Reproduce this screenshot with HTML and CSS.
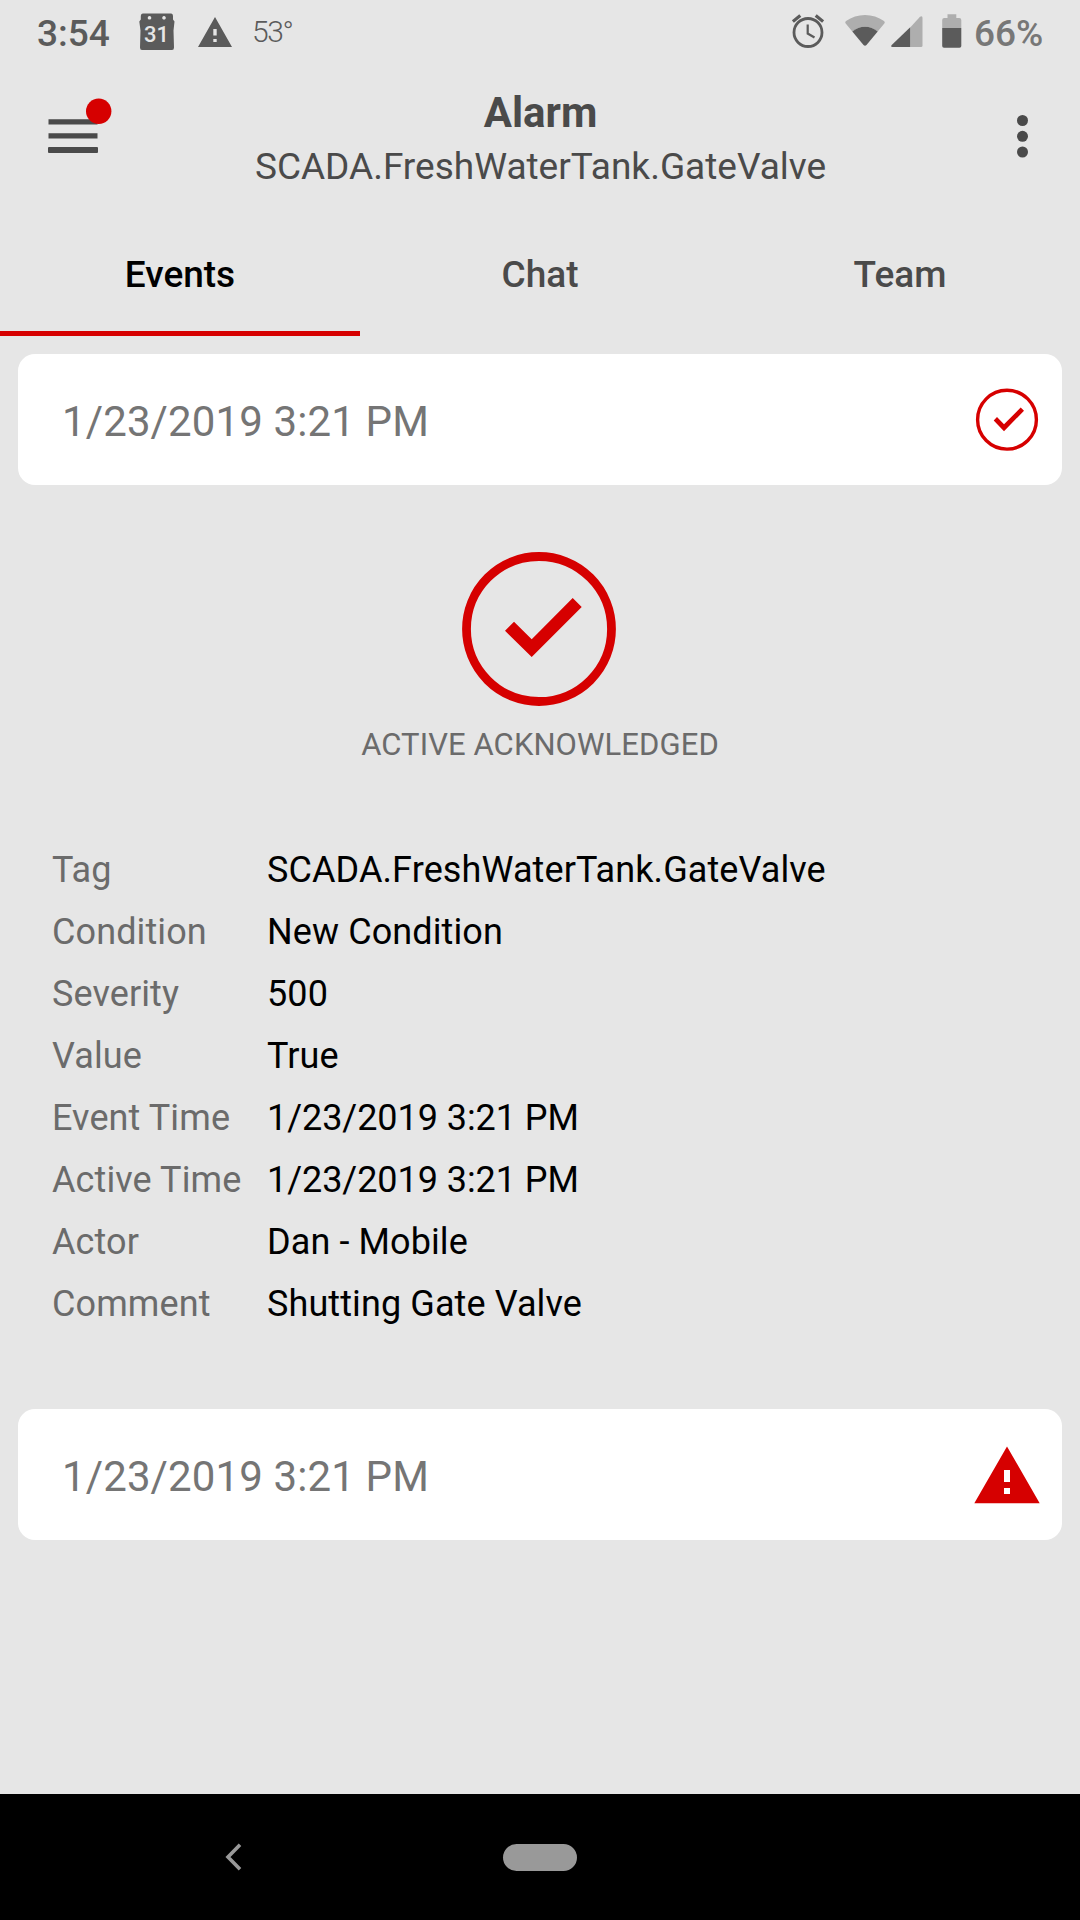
FILE: index.html
```
<!DOCTYPE html>
<html lang="en">
<head>
<meta charset="utf-8">
<title>Alarm</title>
<link rel="stylesheet" href="styles.css">
</head>
<body>
<div class="screen">
  <div class="status-bar">
    <span class="clock">3:54</span>
    <svg class="icon-calendar" width="36" height="38" viewBox="0 0 36 38">
      <path fill="#5b5b5b" fill-rule="evenodd" d="M4 .5h28q2 0 2 3v3l1.500 2-1 9 .5 17q0 2.500-2 2.500H3q-2 0-2-2.500L1.500 17.500.3 8.500 1.800 6.500v-3q0-3 2.200-3zM10.500 3a1.800 1.800 0 1 0 .01 0zM25 3a1.800 1.800 0 1 0 .01 0z"/>
      <text x="17.500" y="29" text-anchor="middle" class="calendar-day">31</text>
    </svg>
    <svg class="icon-warning" width="34" height="30" viewBox="0 0 34 30">
      <path fill="#5b5b5b" fill-rule="evenodd" d="M17 0 34 30H0zM15.300 12v6.500h3.400V12zM15.300 22v3h3.400v-3z"/>
    </svg>
    <span class="temperature">53°</span>
    <span class="spacer"></span>
    <svg class="icon-alarm" width="32" height="34" viewBox="0 0 32 34" fill="none" stroke="#5b5b5b">
      <circle cx="16" cy="18.500" r="14" stroke-width="2.800"/>
      <path stroke-width="2.200" d="M15.700 10.500v9l6.800 4"/>
      <path stroke-width="3.200" d="M.9 7.500 8.300 1.400M31.100 7.500 23.700 1.400"/>
    </svg>
    <svg class="icon-wifi" width="40" height="31" viewBox="0 0 40 31">
      <path fill="#aeaeae" d="M.3 8Q0 6.800 1 6 9.500 0 20 0t19 6q1 .8.7 2l-7 8.500Q20 7 7.300 16.500z"/>
      <path fill="#5b5b5b" d="M7.300 16.500Q13 11.800 20 11.800t12.700 4.700L21.500 30q-1.500 1.600-3 0z"/>
    </svg>
    <svg class="icon-signal" width="32" height="31" viewBox="0 0 32 31">
      <path fill="#aeaeae" d="M19.200 31V11.500L29 .7q2.500-1.500 2.500 1.300v27.500q0 1.500-1.500 1.500z"/>
      <path fill="#5b5b5b" d="M19.200 11.200V31H1.500Q-.8 30.800.7 29z"/>
    </svg>
    <svg class="icon-battery" width="20" height="34" viewBox="0 0 20 34">
      <path fill="#aeaeae" d="M.2 14V6q0-2 2-2h3.300V.2h8.800V4h3q2 0 2 2v8z"/>
      <path fill="#5b5b5b" d="M.2 14h19.100v18q0 1.800-1.800 1.800H2Q.2 33.800.2 32z"/>
    </svg>
    <span class="battery-level">66%</span>
  </div>

  <header class="app-bar">
    <svg class="menu-button" width="65" height="57" viewBox="0 0 65 57">
      <path fill="#4a4a4a" d="M.5 21.200h49v5.200H.5zM.5 35.200h49v5.200H.5z"/>
      <rect x="0" y="49" width="50" height="6" rx="1" fill="#4a4a4a"/>
      <circle cx="50.700" cy="13.200" r="12.700" fill="#d60000"/>
    </svg>
    <div class="heading">
      <h1 class="title">Alarm</h1>
      <div class="subtitle">SCADA.FreshWaterTank.GateValve</div>
    </div>
    <svg class="more-button" width="12" height="44" viewBox="0 0 12 44" fill="#4a4a4a">
      <circle cx="5.500" cy="6.500" r="5.500"/><circle cx="5.500" cy="22.300" r="5.500"/><circle cx="5.500" cy="38" r="5.500"/>
    </svg>
  </header>

  <nav class="tabs">
    <div class="tab tab-active">Events</div>
    <div class="tab">Chat</div>
    <div class="tab">Team</div>
  </nav>

  <main class="events">
    <section class="event-card">
      <span class="event-date">1/23/2019 3:21 PM</span>
      <svg class="event-icon" width="66" height="66" viewBox="-33 -33 66 66">
        <circle cy="-.3" r="29.400" fill="none" stroke="#d60000" stroke-width="3.400"/>
        <path fill="#d60000" d="M-13.300.4-10-3-3 4.300 13.700-12.600 17-9.300-3 11.200z"/>
      </svg>
    </section>

    <section class="event-state">
      <svg width="154" height="154" viewBox="-77 -77 154 154">
        <circle r="72.500" fill="none" stroke="#d60000" stroke-width="8.800"/>
        <path fill="#d60000" d="M-34 1.700-25-7.300-7.300 10.300 33.700-31 42.700-22-7.300 28z"/>
      </svg>
      <div class="state-label">ACTIVE ACKNOWLEDGED</div>
    </section>

    <dl class="details">
      <dt>Tag</dt><dd>SCADA.FreshWaterTank.GateValve</dd>
      <dt>Condition</dt><dd>New Condition</dd>
      <dt>Severity</dt><dd>500</dd>
      <dt>Value</dt><dd>True</dd>
      <dt>Event Time</dt><dd class="timestamp">1/23/2019 3:21 PM</dd>
      <dt>Active Time</dt><dd class="timestamp">1/23/2019 3:21 PM</dd>
      <dt>Actor</dt><dd>Dan - Mobile</dd>
      <dt>Comment</dt><dd>Shutting Gate Valve</dd>
    </dl>

    <section class="event-card">
      <span class="event-date">1/23/2019 3:21 PM</span>
      <svg class="event-icon" width="66" height="66" viewBox="-33 -33 66 66">
        <path fill="#d60000" fill-rule="evenodd" d="M0-28.500 32.700 28.200H-32.700zM-3-5V7H3V-5zM-3 13v6H3v-6z"/>
      </svg>
    </section>
  </main>

  <footer class="system-nav">
    <svg class="back" width="17" height="28" viewBox="0 0 17 28">
      <path fill="none" stroke="#999" stroke-width="3.600" d="M15 1.800 3 14l12 12.200"/>
    </svg>
    <span class="home"></span>
  </footer>
</div>
</body>
</html>
```
FILE: styles.css
```
* {
  box-sizing: border-box;
}

body {
  margin: 0;
  font-family: Roboto, sans-serif;
  background: #e6e6e6;
}

svg {
  display: block;
  flex: none;
}

.screen {
  display: flex;
  flex-direction: column;
  width: 1080px;
  height: 1920px;
  overflow: hidden;
}

.status-bar {
  display: flex;
  align-items: flex-start;
  height: 66px;
  padding: 0 37px;
  color: #5b5b5b;
}

.clock,
.battery-level {
  font-size: 37px;
  font-weight: 500;
  line-height: 68px;
}

.clock {
  width: 102px;
}

.calendar-day {
  font-size: 22px;
  font-weight: 500;
  fill: #e6e6e6;
}

.icon-calendar {
  margin-top: 13px;
}

.icon-warning {
  margin: 17px 0 0 23px;
}

.temperature {
  margin-left: 20px;
  font-size: 30px;
  font-weight: 300;
  line-height: 63px;
  letter-spacing: -1.4px;
}

.spacer {
  flex: 1;
}

.icon-alarm {
  margin-top: 14px;
}

.icon-wifi {
  margin: 15px 0 0 21px;
}

.icon-signal {
  margin: 16px 0 0 6px;
}

.icon-battery {
  margin: 14px 0 0 19px;
}

.battery-level {
  width: 69px;
  margin-left: 12px;
  color: #777;
}

.app-bar {
  display: flex;
  align-items: flex-start;
  height: 152px;
  padding: 0 51px 0 48px;
}

.menu-button {
  margin-top: 32px;
}

.heading {
  flex: 1;
  padding: 22px 0 0 0;
  margin-right: 49px;
  text-align: center;
  color: #4a4a4a;
}

.title {
  margin: 0 0 6px;
  font-size: 42px;
  font-weight: 700;
  line-height: 50px;
}

.subtitle {
  font-size: 37px;
  line-height: 46px;
}

.more-button {
  margin-top: 48px;
}

.tabs {
  display: grid;
  grid-template-columns: repeat(3, 1fr);
  height: 118px;
}

.tab {
  border-bottom: 5px solid transparent;
  font-size: 37px;
  font-weight: 500;
  line-height: 113px;
  text-align: center;
  color: #4a4a4a;
}

.tab-active {
  border-bottom-color: #d60000;
  color: #000;
}

.events {
  flex: 1;
  padding: 18px;
}

.event-card {
  display: flex;
  align-items: center;
  justify-content: space-between;
  height: 131px;
  padding: 0 22px 0 44px;
  border-radius: 17px;
  background: #fff;
}

.event-date {
  padding-top: 4px;
  font-size: 42px;
  line-height: 50px;
  letter-spacing: 0.12px;
  color: #757575;
}

.event-state {
  display: flex;
  flex-direction: column;
  align-items: center;
  padding-top: 67px;
}

.event-state svg {
  margin-right: 2px;
}

.state-label {
  margin-top: 19px;
  font-size: 31px;
  line-height: 40px;
  letter-spacing: 0.08px;
  color: #6b6b6b;
}

.details {
  display: grid;
  grid-template-columns: 215px 1fr;
  margin: 74px 0;
  padding-left: 34px;
  font-size: 36px;
  line-height: 62px;
  letter-spacing: 0.1px;
}

.details dt {
  color: #6b6b6b;
}

.details dd {
  margin: 0;
  color: #000;
}

.details .timestamp {
  letter-spacing: -0.05px;
}

.system-nav {
  display: flex;
  align-items: center;
  height: 126px;
  padding-left: 225px;
  background: #000;
}

.home {
  width: 74px;
  height: 27px;
  margin-left: 261px;
  border-radius: 14px;
  background: #999;
}
```
